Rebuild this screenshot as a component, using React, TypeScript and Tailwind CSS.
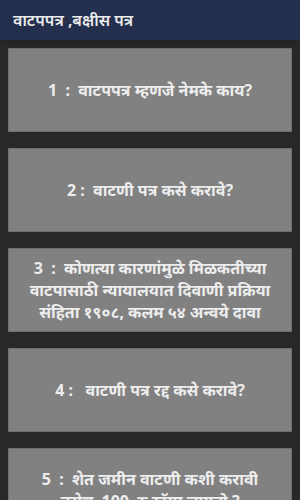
const questions = [
  '1  :  वाटपपत्र म्हणजे नेमके काय?',
  '2 :  वाटणी पत्र कसे करावे?',
  '3  :  कोणत्या कारणांमुळे मिळकतीच्या वाटपासाठी न्यायालयात दिवाणी प्रक्रिया संहिता १९०८, कलम ५४ अन्वये दावा दाखल करता येतो?',
  '4 :   वाटणी पत्र रद्द कसे करावे?',
  '5  :  शेत जमीन वाटणी कशी करावी\nतसेच  100  रु स्टॅम्प लागतो ?',
  '6  :  बक्षीस पत्र म्हणजे काय?',
];

export default function App() {
  return (
    <div
      className="h-[500px] w-[300px] overflow-hidden bg-[#282828]"
      style={{ fontFamily: '"Noto Sans", Roboto, sans-serif' }}
    >
      <header className="flex h-[40px] items-center bg-[#232f4c] px-[13px] shadow-md">
        <h1 className="text-[16px] font-semibold text-[#ececec]">वाटपपत्र ,बक्षीस पत्र</h1>
      </header>

      <div className="flex flex-col gap-[16px] px-[8px] pt-[8px]">
        {questions.map((q, i) => (
          <div
            key={i}
            className="flex h-[84px] shrink-0 items-center justify-center overflow-hidden border border-[#6e6e6e] bg-[#818181] px-[14px]"
          >
            <p className="max-h-[66px] overflow-hidden whitespace-pre-wrap text-center text-[16px] font-bold leading-[22px] text-[#ededed]">
              {q}
            </p>
          </div>
        ))}
      </div>
    </div>
  );
}
